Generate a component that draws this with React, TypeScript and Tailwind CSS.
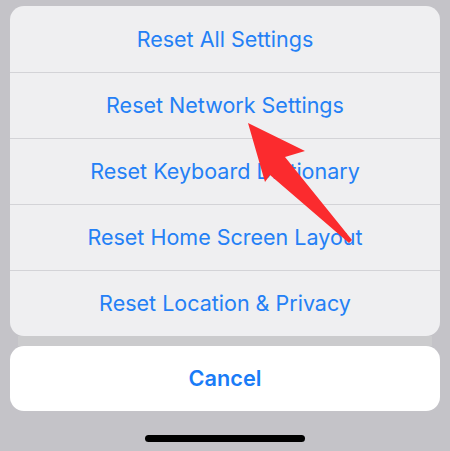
import React from "react";

const actions = [
  "Reset All Settings",
  "Reset Network Settings",
  "Reset Keyboard Dictionary",
  "Reset Home Screen Layout",
  "Reset Location & Privacy",
];

export default function App() {
  return (
    <div
      className="relative w-[450px] h-[451px] bg-[#c4c3c8] overflow-hidden flex flex-col pt-[6px]"
      style={{ fontFamily: "Inter, 'Liberation Sans', sans-serif" }}
    >
      {/* Action sheet */}
      <div className="mx-[10px] rounded-[14px] bg-[#efeff1] overflow-hidden">
        {actions.map((label, i) => (
          <div
            key={label}
            className={`h-[66px] flex items-center justify-center text-[21.5px] text-[#2480f6] ${
              i > 0 ? "border-t border-[#d3d3d7]" : ""
            }`}
          >
            {label}
          </div>
        ))}
      </div>

      <div className="mx-[18px] h-[10px] bg-[#cbcbcd]" />

      {/* Cancel */}
      <div className="mx-[10px] h-[65px] rounded-[14px] bg-white flex items-center justify-center text-[21.7px] font-semibold text-[#1a7cf7]">
        Cancel
      </div>

      {/* Home indicator */}
      <div className="mt-[24px] mx-auto w-[160px] h-[7px] rounded-full bg-black" />

      {/* Red arrow overlay */}
      <svg className="absolute left-0 top-0" width="450" height="451" viewBox="0 0 450 451">
        <polygon
          points="248,123 305,151 285,157 352,240 349,243 270,175 265,182"
          fill="#fb2b2e"
        />
      </svg>
    </div>
  );
}
